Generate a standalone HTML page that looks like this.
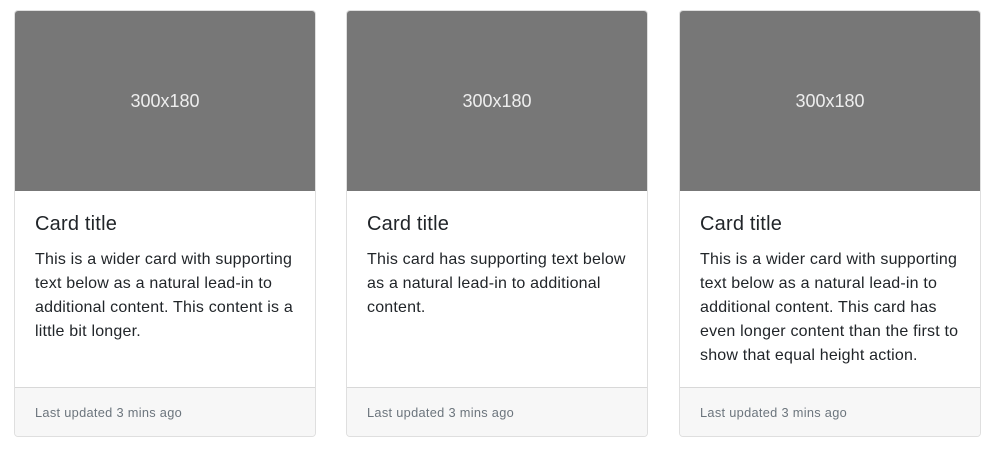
<!DOCTYPE html>
<html><head><style>
body{margin:0;background:#fff;font-family:"Liberation Sans",sans-serif;color:#212529}
.card{position:absolute;top:10px;width:300px;height:425px;border:1px solid rgba(0,0,0,.125);border-radius:4px;overflow:hidden;background:#fff}
.img{height:180px;background:#777;color:#eee;font-size:18px;display:flex;align-items:center;justify-content:center}
.body{padding:21px 20px 20px;height:155px}
h5{margin:0 0 12px;font-size:20px;font-weight:500;line-height:24px;letter-spacing:0.2px}
p{margin:0;font-size:16px;line-height:24px;letter-spacing:0.2px}
.foot{position:absolute;left:0;right:0;bottom:0;height:48px;background:#f7f7f7;border-top:1px solid rgba(0,0,0,.125);font-size:12.8px;color:#6c757d;padding:0 20px;line-height:50px;letter-spacing:0.3px}
</style></head><body>
<div class="card" style="left:14px"><div class="img">300x180</div><div class="body"><h5>Card title</h5><p>This is a wider card with supporting text below as a natural lead-in to additional content. This content is a little bit longer.</p></div><div class="foot">Last updated 3 mins ago</div></div>
<div class="card" style="left:346px"><div class="img">300x180</div><div class="body"><h5>Card title</h5><p>This card has supporting text below as a natural lead-in to additional content.</p></div><div class="foot">Last updated 3 mins ago</div></div>
<div class="card" style="left:679px"><div class="img">300x180</div><div class="body"><h5>Card title</h5><p>This is a wider card with supporting text below as a natural lead-in to additional content. This card has even longer content than the first to show that equal height action.</p></div><div class="foot">Last updated 3 mins ago</div></div>
</body></html>
